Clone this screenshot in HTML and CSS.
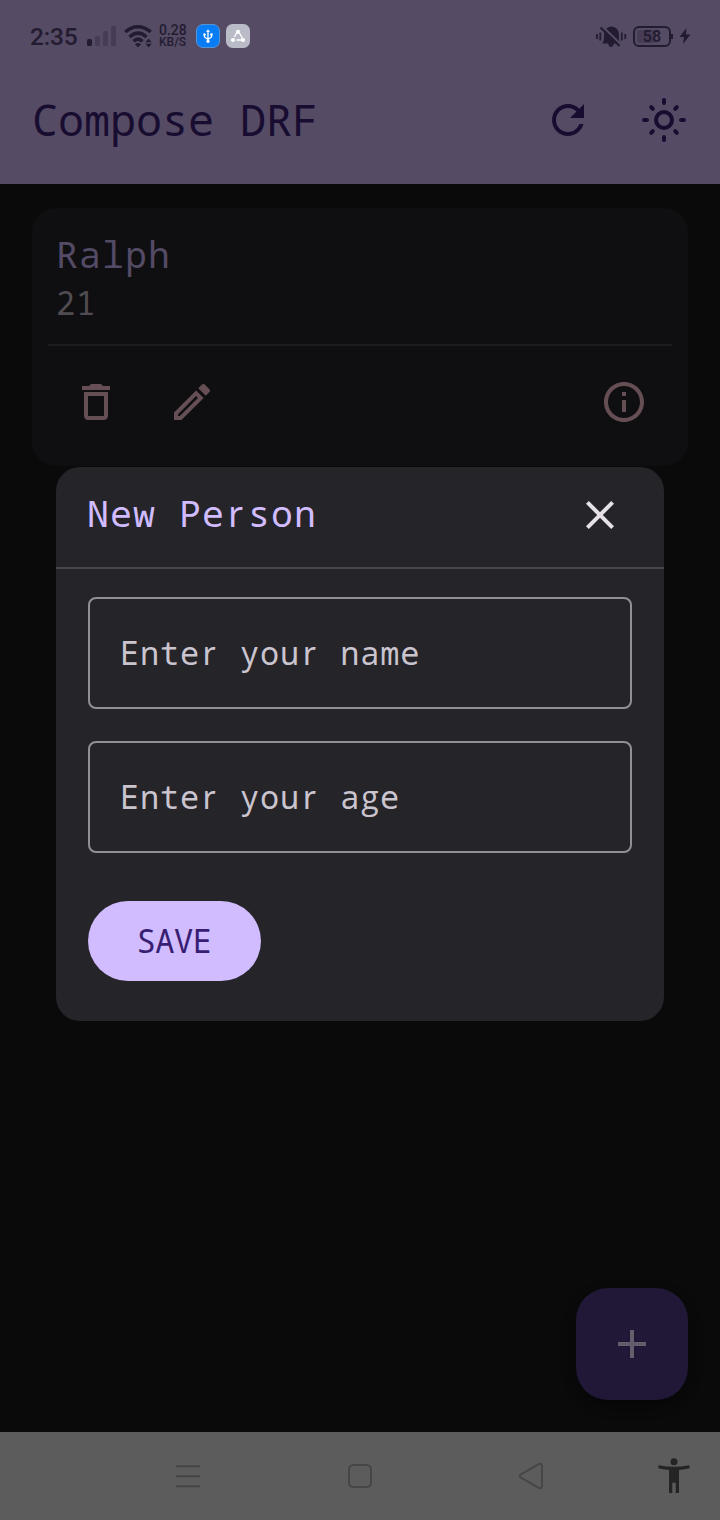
FILE: index.html
```html
<!DOCTYPE html>
<html lang="en">
<head>
<meta charset="utf-8">
<title>Compose DRF</title>
<link rel="stylesheet" href="styles.css">
</head>
<body>
<div class="screen">
  <header class="top">
    <div class="status">
      <span class="clock">2:35</span>
      <svg class="signal" width="30" height="22" viewBox="0 0 30 22"><rect x="1" y="14" width="5" height="7" rx="1.5" fill="#231c30"/><g fill="#463c56"><rect x="9" y="11" width="5" height="10" rx="1.5"/><rect x="17" y="6" width="5" height="15" rx="1.5"/><rect x="25" y="1" width="5" height="20" rx="1.5"/></g></svg>
      <svg class="wifi" width="30" height="24" viewBox="0 0 30 24"><g fill="none" stroke="#231c30" stroke-width="3.500"><path d="M1.300 8C9 1 19 1 26.700 8"/><path d="M5.500 13C11 8 17 8 22.500 13"/><path d="M9.500 17.300C12.500 14.500 15.500 14.500 18.500 17.300"/></g><path d="M11 20.300q3-2.500 6 0l-3 3zM21.500 18.300l3.100-3.800 3.100 3.800zM21.500 19.800h6.200l-3.100 3.800z" fill="#231c30"/></svg>
      <span class="rate"><span>0.28</span><span>KB/S</span></span>
      <svg class="usb" width="24" height="24" viewBox="0 0 24 24"><rect x=".5" y=".5" width="23" height="23" rx="6.500" fill="#087cf5" stroke="#5794d2"/><g fill="none" stroke="#fff" stroke-width="1.300"><path d="M12 7v10M8.500 10v3l3.500 2.500 3.500-2.500v-3"/></g><path d="M10 8L12 5.300 14 8z" fill="#fff"/><circle cx="12" cy="17.300" r="1.600" fill="#fff"/><circle cx="8.500" cy="10.500" r="1.200" fill="#fff"/><path d="M14.300 9.300h2.300v2.300h-2.300z" fill="#fff"/></svg>
      <svg class="share" width="24" height="24" viewBox="0 0 24 24"><rect width="24" height="24" rx="6.500" fill="#b9bcc7"/><path d="M10.800 8.500l-2.500 4.500M13.200 8.500l3.300 6M10.500 16h6" stroke="#fff" stroke-width="1.300"/><g fill="#fff"><circle cx="12" cy="7.800" r="2.100"/><circle cx="7" cy="16" r="2.100"/><circle cx="17" cy="16" r="2.100"/></g></svg>
      <span class="grow"></span>
      <svg class="bell" width="32" height="24" viewBox="0 0 32 24"><path d="M7 19.500c2-2 2-4 2-8C9 6 12 2.500 16.500 2.500S24 6 24 11.500c0 4 0 6 1.500 8zM13 19.500h6q-1 3.500-3 3.500t-3-3.500z" fill="#231c30"/><path d="M7 2L26 20.500" stroke="#554b65" stroke-width="2.200"/><path d="M5.500 3.500L24.500 22" stroke="#231c30" stroke-width="2"/><path d="M2 10v5M5.300 8.500v8M26.800 8.500v8M30.300 10v5" stroke="#231c30" stroke-width="1.800"/></svg>
      <span class="battery"><i class="charge"></i><b>58</b></span>
      <svg class="bolt" width="12" height="18" viewBox="0 0 12 18"><path d="M7.500 1L0.500 10H5L4 17l7.500-9.500H7z" fill="#231c30"/></svg>
    </div>
    <div class="appbar">
      <h1 class="title">Compose DRF</h1>
      <svg width="48" height="48" viewBox="0 0 24 24" fill="#180d30"><path d="M17.650 6.350C16.200 4.900 14.210 4 12 4c-4.420 0-7.990 3.580-7.990 8s3.570 8 7.990 8c3.730 0 6.840-2.550 7.730-6h-2.080c-.82 2.330-3.040 4-5.650 4-3.310 0-6-2.690-6-6s2.690-6 6-6c1.660 0 3.140.69 4.220 1.780L13 11h7V4l-2.350 2.350z"/></svg>
      <svg width="48" height="48" viewBox="0 0 24 24" fill="none" stroke="#180d30" stroke-width="2" stroke-linecap="round"><circle cx="12" cy="12" r="4"/><path d="M12 2v1.500M12 20.500V22M2 12h1.500M20.500 12H22M5.600 5.600l.8.800M17.600 17.600l.8.800M5.600 18.400l.8-.8M17.600 6.400l.8-.8"/></svg>
    </div>
  </header>
  <main class="content">
    <article class="card">
      <div class="person"><div class="name">Ralph</div><div class="age">21</div></div>
      <div class="actions">
        <svg width="48" height="48" viewBox="0 0 24 24" fill="#664f54"><path d="M6 19c0 1.100.9 2 2 2h8c1.100 0 2-.9 2-2V7H6v12zM8 9h8v10H8V9zm7.500-5l-1-1h-5l-1 1H5v2h14V4z"/></svg>
        <svg width="48" height="48" viewBox="0 0 24 24" fill="#664f54"><path d="M14.060 9.020l.92.920L5.920 19H5v-.92l9.060-9.060M17.660 3c-.25 0-.51.1-.7.290l-1.830 1.830 3.750 3.750 1.830-1.830c.39-.39.39-1.020 0-1.410l-2.340-2.340c-.2-.2-.45-.29-.71-.29zm-3.600 3.190L3 17.250V21h3.750L17.810 9.940l-3.750-3.750z"/></svg>
        <span class="grow"></span>
        <svg width="48" height="48" viewBox="0 0 24 24" fill="#664f54"><path d="M11 7h2v2h-2zm0 4h2v6h-2zm1-9C6.480 2 2 6.480 2 12s4.480 10 10 10 10-4.480 10-10S17.520 2 12 2zm0 18c-4.410 0-8-3.590-8-8s3.590-8 8-8 8 3.590 8 8-3.590 8-8 8z"/></svg>
      </div>
    </article>
  </main>
  <nav class="nav">
    <svg class="key" width="28" height="28" viewBox="0 0 28 28"><path d="M2 4.300h24M2 14.300h24M2 24.300h24"/></svg>
    <svg class="key" width="28" height="28" viewBox="0 0 28 28"><rect x="3" y="3" width="22" height="22" rx="4.500"/></svg>
    <svg class="key" width="28" height="28" viewBox="0 0 28 28"><path d="M2.500 12.700L20.700 2.200Q24 1 24 4v20q0 3-3.300 1.800L2.500 15.300q-1.800-1.300 0-2.600z"/></svg>
    <svg class="access" width="32" height="36" viewBox="0 0 32 36" fill="#242424"><circle cx="16" cy="3.700" r="3.500"/><path d="M.8 7.300Q16 10.300 31.200 7.300l.6 3Q27 11.500 21 12v23h-3.300V24.700h-3.400V35H11V12Q5 11.500.2 10.300z"/></svg>
  </nav>
  <button class="fab" aria-label="Add"><svg width="48" height="48" viewBox="0 0 24 24" fill="#645d6d"><path d="M19 13h-6v6h-2v-6H5v-2h6V5h2v6h6v2z"/></svg></button>
  <section class="dialog">
    <div class="dialog-head">
      <h2 class="dialog-title">New Pe<span class="plain">r</span>son</h2>
      <svg width="48" height="48" viewBox="0 0 48 48"><path d="M11.400 12.400l25.200 25.200M36.600 12.400L11.400 37.600" stroke="#e6e1e6" stroke-width="4"/></svg>
    </div>
    <div class="form">
      <div class="field">Ente<span class="plain">r</span> you<span class="plain">r</span> name</div>
      <div class="field">Ente<span class="plain">r</span> you<span class="plain">r</span> a<span class="looped">g</span>e</div>
      <button class="save">SAVE</button>
    </div>
  </section>
</div>
</body>
</html>
```
FILE: styles.css
```css
* { box-sizing: border-box; }
body { margin: 0; background: #0a0a0a; }
svg { display: block; flex: none; }
h1, h2 { margin: 0; font-weight: 400; }
button { border: 0; padding: 0; }
.grow { flex: 1; }
.screen {
  position: relative;
  display: flex;
  flex-direction: column;
  width: 720px;
  height: 1520px;
  overflow: hidden;
  background: #0a0a0a;
  font-family: "Noto Sans Mono", "DejaVu Sans Mono", monospace;
}
/* slab-less r and double-storey g, padded to the monospace advance */
.plain { padding-left: .08em; font-family: "Noto Sans", sans-serif; letter-spacing: .135em; line-height: 1; }
.looped { padding-left: .03em; font-family: "Open Sans", sans-serif; letter-spacing: .047em; line-height: 1; }
.top { height: 184px; background: #554b65; }
.status {
  display: flex;
  align-items: center;
  height: 72px;
  padding: 0 30px;
  font-family: Roboto, sans-serif;
  color: #231c30;
}
.clock { width: 56px; padding-top: 1px; font-size: 24.500px; font-weight: 500; letter-spacing: -.2px; }
.wifi { margin-left: 8px; }
.rate {
  display: flex;
  flex-direction: column;
  width: 29px;
  margin: 0 8px 0 5px;
  font-size: 12px;
  line-height: 12px;
  font-weight: 500;
  white-space: nowrap;
}
.rate span:first-child { font-size: 14px; }
.share { margin-left: 6px; }
.battery {
  position: relative;
  display: flex;
  justify-content: center;
  align-items: center;
  width: 38px;
  height: 21px;
  margin: 0 8px 0 5px;
  border: 2px solid #231c30;
  border-radius: 6px;
  font-size: 16px;
}
.bell { margin-right: 1px; }
.bolt { margin-right: -1px; }
.battery b { position: relative; font-weight: 600; }
.battery::after {
  content: "";
  position: absolute;
  right: -4px;
  top: 6px;
  width: 2px;
  height: 5px;
  background: #231c30;
}
.charge { position: absolute; inset: 2px 13px 2px 2px; border-radius: 3px; background: #463c56; }
.appbar { display: flex; align-items: center; gap: 48px; height: 96px; padding: 0 32px; }
.title {
  flex: 1;
  padding: 0 0 3px;
  font-size: 43.500px;
  letter-spacing: -.1px;
  color: #180d30;
  white-space: nowrap;
}
.content { flex: 1; padding: 24px 32px; }
.card { height: 258px; padding: 0 16px; border-radius: 24px; background: #0f0f11; }
.person { height: 138px; padding: 22px 8px 0; border-bottom: 2px solid #1c1c1e; }
.name { font-size: 36.500px; line-height: 49px; letter-spacing: 1.100px; color: #534a65; }
.age { font-size: 32px; line-height: 48px; letter-spacing: .8px; color: #504d52; }
.actions { display: flex; gap: 48px; padding: 32px 24px; }
.nav {
  position: relative;
  display: flex;
  justify-content: center;
  align-items: center;
  gap: 144px;
  height: 88px;
  background: #5c5c5c;
}
.key { fill: none; stroke: #464646; stroke-width: 2; }
.access { position: absolute; right: 30px; top: 26px; }
.fab {
  position: absolute;
  right: 32px;
  bottom: 120px;
  display: grid;
  place-items: center;
  width: 112px;
  height: 112px;
  border-radius: 32px;
  background: #211736;
  box-shadow: 0 6px 12px #070709;
}
.dialog {
  position: absolute;
  left: 56px;
  top: 467px;
  width: 608px;
  height: 554px;
  border-radius: 24px;
  background: #252429;
}
.dialog-head {
  display: flex;
  align-items: center;
  height: 102px;
  padding: 0 40px 6px 31px;
  border-bottom: 2px solid #48464c;
}
.dialog-title {
  flex: 1;
  padding-bottom: 2px;
  font-size: 36.500px;
  line-height: 48px;
  letter-spacing: 1.100px;
  color: #d0bcff;
}
.form { display: flex; flex-direction: column; align-items: flex-start; gap: 32px; padding: 28px 32px; }
.field {
  width: 100%;
  height: 112px;
  padding-left: 30px;
  border: 2px solid #929095;
  border-radius: 8px;
  font-size: 32px;
  line-height: 107px;
  letter-spacing: .8px;
  color: #cac4cf;
}
.save {
  width: 173px;
  height: 80px;
  margin-top: 16px;
  padding: 0 1px 2px 0;
  border-radius: 40px;
  background: #d0bcff;
  color: #381e72;
  font: 32px "Noto Sans Mono", "DejaVu Sans Mono", monospace;
  letter-spacing: -.4px;
}
```
